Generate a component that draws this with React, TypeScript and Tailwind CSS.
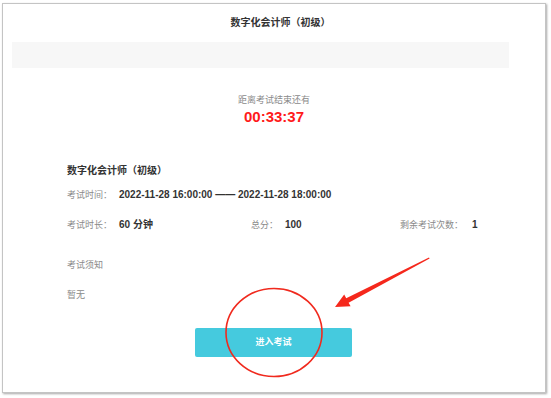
import React from "react";

const font = { fontFamily: '"Liberation Sans","Noto Sans CJK SC",sans-serif' };

const Label: React.FC<{ text: string; className?: string }> = ({ text, className }) => (
  <span className={`text-[9px] text-[#8a8a8a] ${className ?? ""}`}>{text}</span>
);

const Value: React.FC<{ text: string; className?: string }> = ({ text, className }) => (
  <span className={`text-[10px] font-bold text-[#333] ${className ?? ""}`}>{text}</span>
);

export default function App() {
  return (
    <div className="relative w-[551px] h-[398px] bg-white overflow-hidden" style={font}>
      <div className="ml-[2px] mt-[3px] w-[544px] h-[390px] border border-[#c4c4c4] bg-white shadow-[1px_1px_2px_rgba(0,0,0,0.35)] flex flex-col">
        {/* header */}
        <div className="h-[38px] flex items-center justify-center pl-[13px] text-[10px] font-bold leading-[14px] text-[#333]">
          数字化会计师（初级）
        </div>
        <div className="ml-[9px] w-[497px] h-[26px] bg-[#f7f7f7]" />

        {/* countdown */}
        <div className="mt-[25px] flex flex-col items-center">
          <span className="text-[9px] leading-[14px] text-[#8a8a8a]">距离考试结束还有</span>
          <span className="mt-[1px] text-[15px] leading-[18px] font-bold text-[#ff1a1a]">00:33:37</span>
        </div>

        {/* info */}
        <div className="pl-[64px] flex flex-col leading-[14px]">
          <div className="mt-[38px] text-[10px] font-bold text-[#333]">数字化会计师（初级）</div>
          <div className="mt-[10px] flex items-center">
            <Label text="考试时间：" className="w-[52px]" />
            <Value text="2022-11-28 16:00:00 —— 2022-11-28 18:00:00" />
          </div>
          <div className="mt-[16px] flex items-center">
            <Label text="考试时长：" className="w-[52px]" />
            <Value text="60 分钟" className="w-[132px]" />
            <Label text="总分：" className="w-[34px]" />
            <Value text="100" className="w-[115px]" />
            <Label text="剩余考试次数：" className="w-[72px]" />
            <Value text="1" />
          </div>
          <div className="mt-[24px]">
            <Label text="考试须知" />
          </div>
          <div className="mt-[14px]">
            <Label text="暂无" />
          </div>
        </div>

        {/* action */}
        <div className="mt-[26px] flex justify-center pr-[1px]">
          <button className="w-[157px] h-[29px] rounded-[2px] bg-[#45cade] text-white text-[9px] font-bold">
            进入考试
          </button>
        </div>
      </div>

      {/* annotation marks */}
      <svg className="absolute left-0 top-0 pointer-events-none" width="551" height="398" viewBox="0 0 551 398">
        <ellipse cx="274" cy="332.5" rx="48" ry="44" fill="none" stroke="#f02a1e" strokeWidth="1.6" />
        <polygon
          points="429,257.4 346.2,298.3 344.2,294.6 335,307 350.6,306.2 348.6,302.7 429.6,258.6"
          fill="#f5281c"
        />
      </svg>
    </div>
  );
}
